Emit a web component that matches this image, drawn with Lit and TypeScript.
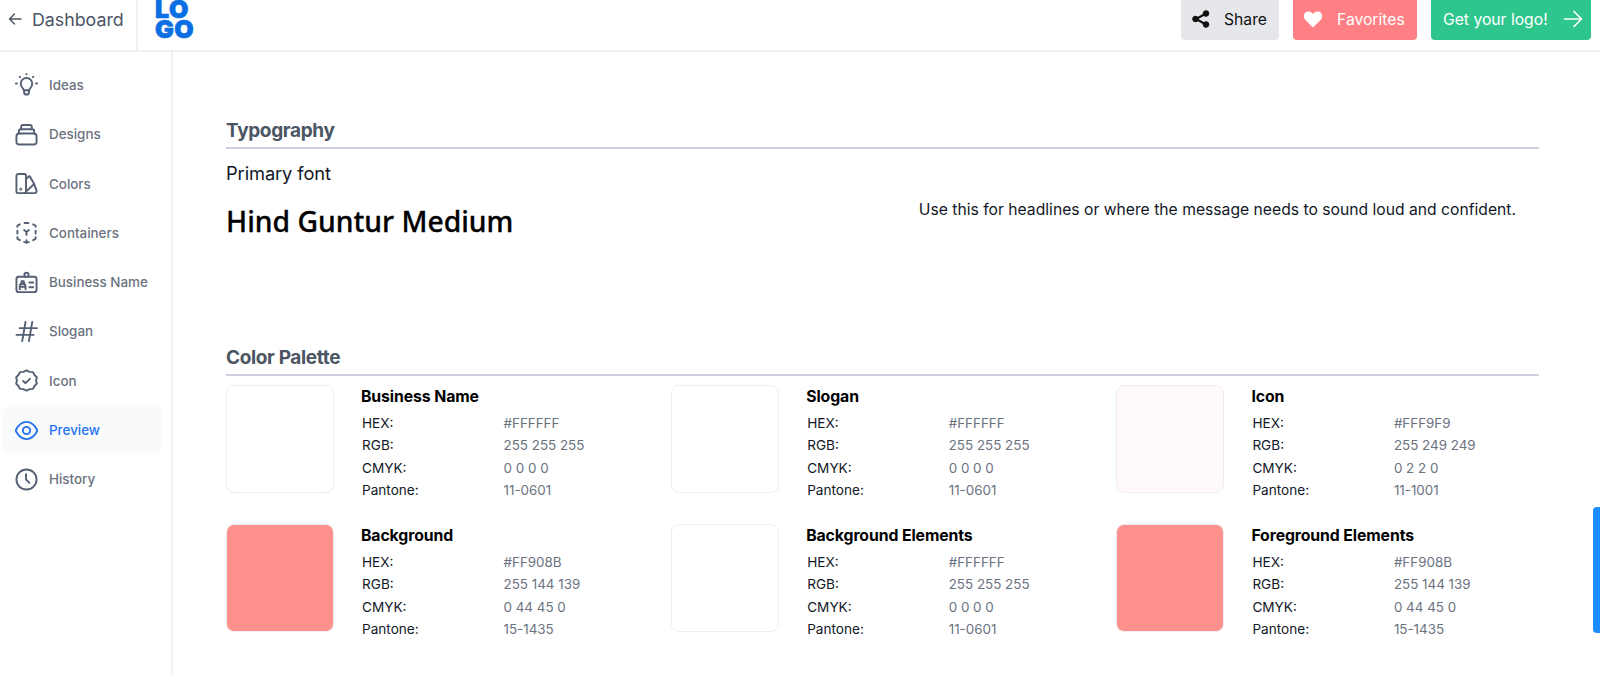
import { LitElement, html, css, svg } from "lit";
import { customElement } from "lit/decorators.js";

const s = (body: unknown, vb = "0 0 24 24") => html`<svg viewBox=${vb} class="ic" fill="none" stroke="currentColor" stroke-width="2" stroke-linecap="round" stroke-linejoin="round">${body}</svg>`;

const nav: [string, unknown, boolean?][] = [
  ["Ideas", s(svg`<path d="M7.800 15.500a6 6 0 1 1 8.400 0c-.8.8-1.200 1.500-1.200 2.500H9c0-1-.4-1.700-1.200-2.500z"/><path d="M9.500 18.500v1.500a2.500 2.500 0 0 0 5 0v-1.500"/><path d="M12 1v.3M4.800 3.800l.5.5M19.200 3.800l-.5.5M1 11h1M22 11h1"/>`)],
  ["Designs", s(svg`<rect x="1.500" y="11" width="21" height="11.500" rx="3"/><path d="M4 11V8.500a2 2 0 0 1 2-2h12a2 2 0 0 1 2 2V11"/><path d="M6.500 6.500V4a2 2 0 0 1 2-2h7a2 2 0 0 1 2 2v2.500"/>`)],
  ["Colors", s(svg`<path d="M1.500 4a2 2 0 0 1 2-2h6a2 2 0 0 1 2 2v16a2 2 0 0 1-2 2h-6a2 2 0 0 1-2-2z"/><path d="M11.500 7.500l3-3 .9 0 4.600 8-8.500 8"/><path d="M9.500 22h11a2 2 0 0 0 2-2.500l-2.500-7"/><circle cx="6" cy="18" r=".5"/>`)],
  ["Containers", s(svg`<path d="M10 2h4M2.500 10v3M21.500 10v3M9.500 22h5M2.500 6V5l2.500-1.500M21.500 6V5L19 3.500M2.500 17v1.500L5 20M21.500 17v1.500L19 20M12 20v3"/><path d="M9.500 9.500l2.500 2 2.500-2M12 11.500v3"/>`)],
  ["Business Name", s(svg`<rect x="1.500" y="6" width="21" height="16" rx="2.500"/><circle cx="12" cy="4" r="2.200" fill="#fff"/><path d="M5 19v-3c0-4 6-4 6 0v3M5.500 16.500h5"/><circle cx="8" cy="12" r="1.500"/><path d="M15 12h4M15 17h4"/>`)],
  ["Slogan", s(svg`<path d="M5 8.500h18M1.500 15.500h18M11 2L7.500 22M18 2l-3.500 20"/>`)],
  ["Icon", s(svg`<path d="M12 1.500l3.300 1.500 3.500.3 1.600 3 2.400 2.400-.8 3.300.8 3.300-2.400 2.400-1.600 3-3.500.3-3.300 1.500-3.300-1.500-3.500-.3-1.600-3-2.400-2.400.8-3.300-.8-3.300 2.400-2.400 1.600-3 3.500-.3z"/><path d="M8.500 12.500l2.500 2.300 4.500-4.500"/>`)],
  ["Preview", s(svg`<path d="M.6 12C3.500 6 7.500 3 12 3s8.500 3 11.400 9c-2.900 6-6.900 9-11.400 9S3.500 18 .6 12z"/><circle cx="12" cy="12" r="3.800"/>`), true],
  ["History", s(svg`<circle cx="12" cy="12" r="10.500"/><path d="M11.500 6.500V12l3.500 3.500"/>`)],
];

type C = { name: string; hex: string; rgb: string; cmyk: string; pantone: string };
const palette: C[] = [
  { name: "Business Name", hex: "#FFFFFF", rgb: "255 255 255", cmyk: "0 0 0 0", pantone: "11-0601" },
  { name: "Slogan", hex: "#FFFFFF", rgb: "255 255 255", cmyk: "0 0 0 0", pantone: "11-0601" },
  { name: "Icon", hex: "#FFF9F9", rgb: "255 249 249", cmyk: "0 2 2 0", pantone: "11-1001" },
  { name: "Background", hex: "#FF908B", rgb: "255 144 139", cmyk: "0 44 45 0", pantone: "15-1435" },
  { name: "Background Elements", hex: "#FFFFFF", rgb: "255 255 255", cmyk: "0 0 0 0", pantone: "11-0601" },
  { name: "Foreground Elements", hex: "#FF908B", rgb: "255 144 139", cmyk: "0 44 45 0", pantone: "15-1435" },
];

@customElement("app-root")
export class AppRoot extends LitElement {
  static styles = css`
    :host { display: block; position: relative; width: 1600px; height: 674px; overflow: hidden; background: #fff; font-family: Inter, "Liberation Sans", sans-serif; color: #111827; }
    * { box-sizing: border-box; }
    header { height: 52px; display: flex; border-bottom: 2px solid #f0f1f4; }
    .back { width: 138px; display: flex; align-items: center; gap: 10px; padding: 0 0 12px 8px; border-right: 2px solid #f0f1f4; font-size: 17.800px; color: #4b5563; }
    .back svg { width: 14px; height: 14px; flex: none; }
    .logo { margin-left: 17px; font-weight: 900; font-size: 25px; line-height: 19.500px; letter-spacing: 0.500px; color: #0b6fe3; width: 44px; -webkit-text-stroke: 0.700px #0b6fe3; }
    .logo span { display: block; height: 19.500px; }
    .actions { margin-left: auto; display: flex; gap: 14px; padding-right: 9px; height: 40px; }
    .btn { display: flex; align-items: center; height: 40px; border-radius: 0 0 4px 4px; font-size: 15.700px; color: #fff; padding-bottom: 2px; }
    .btn svg { flex: none; }
    .share { width: 98px; background: #e5e7eb; color: #111; padding-left: 10px; gap: 13px; }
    .fav { width: 124px; background: #ff8084; padding-left: 10px; gap: 14px; }
    .get { width: 160px; background: #2fc68e; padding-left: 12px; gap: 15px; }
    .body { display: flex; height: 622px; }
    aside { width: 173px; flex: none; border-right: 2px solid #f0f1f4; padding: 8.300px 0 0 3px; }
    .item { width: 159px; height: 49.300px; display: flex; align-items: center; gap: 11px; padding-left: 12px; border-radius: 8px; font-size: 13.400px; font-weight: 500; color: #6b7280; }
    .item .ic { width: 23px; height: 23px; flex: none; color: #566074; stroke-width: 2; }
    .item.on { background: #f9fafb; color: #2573f0; }
    .item.on .ic { color: #2573f0; }
    main { flex: 1; min-width: 0; padding: 65px 61px 0 53px; }
    h2 { margin: 0; font-size: 19px; line-height: 28px; font-weight: 700; letter-spacing: -0.350px; color: #4b5563; border-bottom: 2px solid #cfd2de; height: 32px; }
    .type { display: flex; justify-content: space-between; height: 195px; }
    .pf { font-size: 18.300px; line-height: 24px; margin-top: 12px; letter-spacing: -0.100px; }
    .hg { font-family: "Noto Sans", "Open Sans", sans-serif; font-weight: 500; font-size: 28.300px; line-height: 38px; margin-top: 17px; color: #000; -webkit-text-stroke: 0.300px #000; }
    .use { font-size: 15.700px; line-height: 20px; margin: 51px 23px 0 0; white-space: nowrap; }
    .grid { display: grid; grid-template-columns: repeat(3, 445.200px); row-gap: 31px; margin-top: 9px; }
    .card { display: flex; gap: 27px; height: 108px; }
    .sw { width: 108px; height: 108px; border: 1.500px solid #eceef1; border-radius: 8px; flex: none; }
    .info { flex: 1; }
    .title { font-size: 15.800px; font-weight: 700; line-height: 20px; letter-spacing: -0.100px; color: #000; margin-top: 2px; margin-bottom: 5px; }
    .row { display: grid; grid-template-columns: 141.500px 1fr; height: 22.400px; line-height: 22.400px; font-size: 13.600px; padding-left: 1px; }
    .row span:last-child { color: #6b7280; font-size: 13.400px; }
    .bar { position: absolute; right: 0; top: 507px; width: 7px; height: 126px; border-radius: 4px 0 0 4px; background: #1a8cff; }
  `;

  render() {
    return html`
      <header>
        <div class="back">
          <svg viewBox="0 0 14 14" fill="none" stroke="currentColor" stroke-width="1.400" stroke-linecap="round" stroke-linejoin="round"><path d="M13 7H1.500M6.500 2L1.500 7l5 5"/></svg>
          <span>Dashboard</span>
        </div>
        <div class="logo"><span>LO</span><span>GO</span></div>
        <div class="actions">
          <div class="btn share">
            <svg width="20" height="20" viewBox="0 0 20 20" fill="currentColor" stroke="currentColor"><path d="M15 4.500L5 10l10 5.500" fill="none" stroke-width="2"/><circle cx="15" cy="4.500" r="2.800"/><circle cx="4.500" cy="10" r="2.800"/><circle cx="15" cy="15.500" r="2.800"/></svg>
            <span>Share</span>
          </div>
          <div class="btn fav">
            <svg width="20" height="20" viewBox="0 0 20 20" fill="#fff"><path d="M10 18.500L2 10.500C-.5 7.500 1 2.500 5.500 2.500c2 0 3.500 1 4.500 2.500 1-1.500 2.500-2.500 4.500-2.500 4.500 0 6 5 3.500 8z"/></svg>
            <span>Favorites</span>
          </div>
          <div class="btn get">
            <span>Get your logo!</span>
            <svg width="20" height="20" viewBox="0 0 20 20" fill="none" stroke="#fff" stroke-width="1.700" stroke-linecap="round" stroke-linejoin="round"><path d="M1.500 10h17M11 2.500l7.500 7.500-7.500 7.500"/></svg>
          </div>
        </div>
      </header>
      <div class="body">
        <aside>
          ${nav.map(([label, icon, on]) => html`<div class="item ${on ? "on" : ""}">${icon}<span>${label}</span></div>`)}
        </aside>
        <main>
          <h2>Typography</h2>
          <div class="type">
            <div>
              <div class="pf">Primary font</div>
              <div class="hg">Hind Guntur Medium</div>
            </div>
            <div class="use">Use this for headlines or where the message needs to sound loud and confident.</div>
          </div>
          <h2>Color Palette</h2>
          <div class="grid">
            ${palette.map((c) => html`
              <div class="card">
                <div class="sw" style="background:${c.hex}"></div>
                <div class="info">
                  <div class="title">${c.name}</div>
                  <div class="row"><span>HEX:</span><span>${c.hex}</span></div>
                  <div class="row"><span>RGB:</span><span>${c.rgb}</span></div>
                  <div class="row"><span>CMYK:</span><span>${c.cmyk}</span></div>
                  <div class="row"><span>Pantone:</span><span>${c.pantone}</span></div>
                </div>
              </div>`)}
          </div>
        </main>
      </div>
      <div class="bar"></div>
    `;
  }
}
